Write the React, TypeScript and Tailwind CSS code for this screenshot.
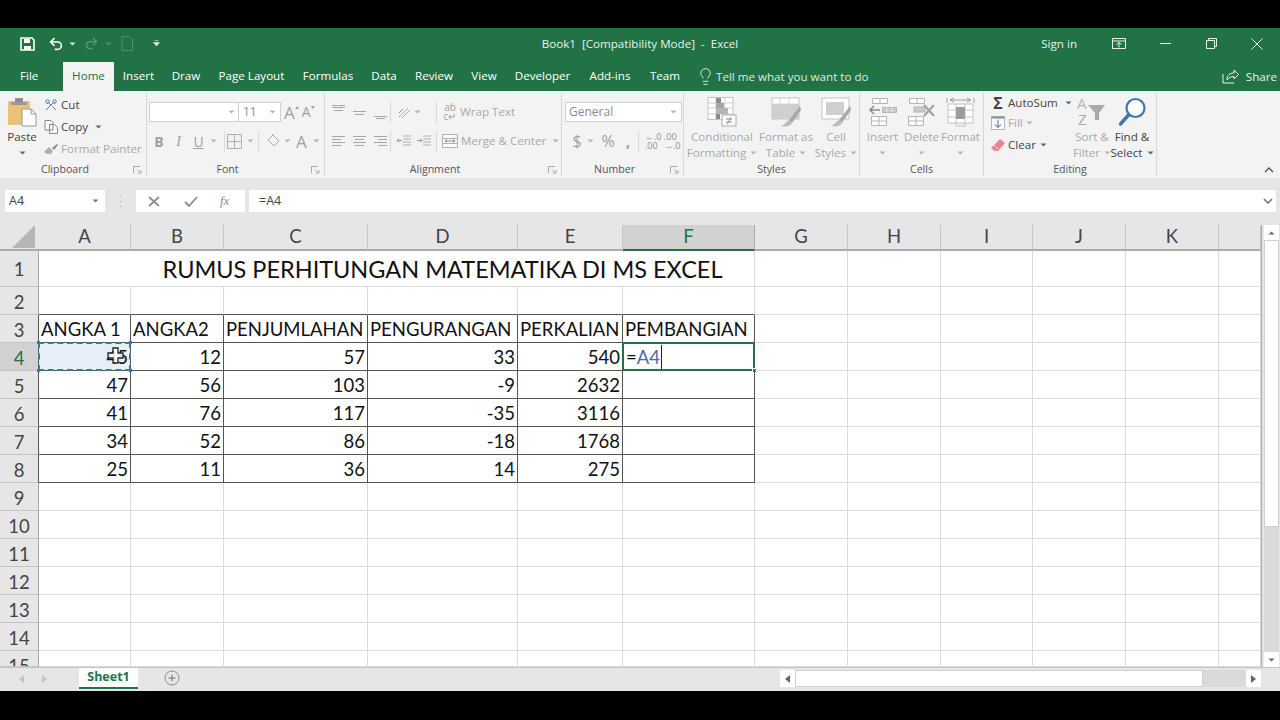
import type { ReactNode } from "react";
import { Lightbulb, Redo2, Scissors, Undo2 } from "lucide-react";

const COLS = ["A", "B", "C", "D", "E", "F", "G", "H", "I", "J", "K", ""];

const TABLE: Record<number, string[]> = {
  3: ["ANGKA 1", "ANGKA2", "PENJUMLAHAN", "PENGURANGAN", "PERKALIAN", "PEMBANGIAN"],
  4: ["45", "12", "57", "33", "540", ""],
  5: ["47", "56", "103", "-9", "2632", ""],
  6: ["41", "76", "117", "-35", "3116", ""],
  7: ["34", "52", "86", "-18", "1768", ""],
  8: ["25", "11", "36", "14", "275", ""],
};

const ROWS = [2, 3, 4, 5, 6, 7, 8, 9, 10, 11, 12, 13, 14, 15];

const TABS = [
  { name: "File", cls: "w-[63px] pl-5 text-left text-white" },
  { name: "Home", cls: "w-[51px] bg-[#f3f3f3] text-[#217346] text-center" },
  { name: "Insert", cls: "w-[49px] text-center text-white" },
  { name: "Draw", cls: "w-[46px] text-center text-white" },
  { name: "Page Layout", cls: "w-[85px] text-center text-white" },
  { name: "Formulas", cls: "w-[68px] text-center text-white" },
  { name: "Data", cls: "w-[44px] text-center text-white" },
  { name: "Review", cls: "w-[56px] text-center text-white" },
  { name: "View", cls: "w-[44px] text-center text-white" },
  { name: "Developer", cls: "w-[73px] text-center text-white" },
  { name: "Add-ins", cls: "w-[62px] text-center text-white" },
  { name: "Team", cls: "w-[48px] text-center text-white" },
];

function Caret({ className = "text-[#777]" }: { className?: string }) {
  return (
    <svg width="7" height="4" viewBox="0 0 7 4" className={`shrink-0 ${className}`}>
      <path d="M0.5 0.5h6L3.5 3.5z" fill="currentColor" />
    </svg>
  );
}

function Sep({ className }: { className: string }) {
  return <span className={`w-px h-[21px] bg-[#d9d9d9] shrink-0 ${className}`} />;
}

function Lines({ rows, stroke = "#a6a6a6" }: { rows: number[][]; stroke?: string }) {
  return (
    <svg width="15" height="15" viewBox="0 0 15 15" className="shrink-0">
      {rows.map(([x1, x2, y]) => (
        <path key={`${x1}-${y}`} d={`M${x1} ${y}.5H${x2}`} stroke={stroke} />
      ))}
    </svg>
  );
}

function Group({
  width,
  label,
  launcher,
  children,
}: {
  width: string;
  label: string;
  launcher?: boolean;
  children: ReactNode;
}) {
  return (
    <div className={`${width} h-[83px] mt-[2px] border-r border-[#d8d8d8] flex flex-col shrink-0`}>
      <div className="h-[70px] flex">{children}</div>
      <div className="h-[13px] mt-[2px] flex items-center text-[10.6px] text-[#555]">
        <div className="flex-1 text-center">{label}</div>
        {launcher && (
          <svg width="16" height="9" viewBox="0 0 16 9" className="shrink-0">
            <path d="M3.5 8V1.5H10M7 4.5L10 7.5M8 8H11V5" fill="none" stroke="#a6a6a6" />
          </svg>
        )}
      </div>
    </div>
  );
}

function BigButton({
  width,
  icon,
  lines,
  dim = true,
  caretOnly,
}: {
  width: string;
  icon: ReactNode;
  lines: [string, string];
  dim?: boolean;
  caretOnly?: boolean;
}) {
  const color = dim ? "text-[#a9a9a9]" : "text-[#444]";
  return (
    <div className={`${width} pt-[4px] flex flex-col items-center shrink-0 text-[11.6px] leading-[16px] ${color}`}>
      <div className="h-[30px] flex items-center justify-center">{icon}</div>
      <div className="mt-[2px] h-[16px] whitespace-nowrap">{lines[0]}</div>
      <div className="h-[16px] flex items-center gap-[4px] whitespace-nowrap">
        {lines[1]}
        {(lines[1] || caretOnly) && <Caret className={dim ? "text-[#b5b5b5]" : "text-[#666]"} />}
      </div>
    </div>
  );
}

function PasteIcon() {
  return (
    <svg width="30" height="30" viewBox="0 0 30 30">
      <rect x="1" y="4" width="22" height="24" fill="#e9c27a" />
      <rect x="8" y="1" width="8" height="6" fill="#8d8d8d" />
      <rect x="4" y="5" width="16" height="3" fill="#9a9a9a" />
      <path d="M15 12h9l5 5v12H15z" fill="#fff" stroke="#9a9a9a" />
      <path d="M24 12v5h5" fill="none" stroke="#9a9a9a" />
    </svg>
  );
}

function CondIcon() {
  return (
    <svg width="30" height="30" viewBox="0 0 30 30">
      <rect x="1" y="0.5" width="25" height="22" fill="#fff" stroke="#c4c4c4" />
      <path d="M1 6h25M1 11h25M1 17h25M9 1v21M18 1v21" stroke="#d0d0d0" />
      <rect x="9" y="1" width="5" height="5" fill="#8d8d8d" />
      <rect x="9" y="6" width="8" height="5" fill="#a6a6a6" />
      <rect x="9" y="11" width="12" height="6" fill="#b5b5b5" />
      <rect x="9" y="17" width="4" height="5" fill="#8d8d8d" />
      <rect x="15" y="18" width="14" height="11" fill="#fff" stroke="#a9a9a9" />
      <path d="M19 22h6M19 25h6M24 20.5l-4 7" stroke="#8d8d8d" fill="none" />
    </svg>
  );
}

function TableBrushIcon({ plain }: { plain?: boolean }) {
  return (
    <svg width="30" height="30" viewBox="0 0 30 30">
      <rect x="1" y="1" width="27" height="21" fill="#fff" stroke="#c4c4c4" />
      {!plain && <path d="M1 7h27M1 12h27M1 17h27M9 1v21M18 1v21" stroke="#d8d8d8" />}
      <rect x={plain ? 5 : 1} y={plain ? 5 : 7} width={plain ? 18 : 27} height={plain ? 13 : 15} fill="#cfcfcf" />
      <path d="M29 9L18 23l3 3L30 13z" fill="#a9a9a9" />
      <path d="M18 23c-3 1-3 4-8 6 5 1 10 0 11-3z" fill="#bdbdbd" />
    </svg>
  );
}

function InsertCellsIcon() {
  return (
    <svg width="30" height="30" viewBox="0 0 30 30">
      <path d="M4.5 1.5h15v5h-15zM12 1.5v5M3.5 19.5h15v9h-15zM11 19.5v9M3.5 24h15" fill="#fff" stroke="#b5b5b5" />
      <path d="M2 13h10M6 9l-4 4 4 4" fill="none" stroke="#8d8d8d" strokeWidth="1.6" />
      <path d="M14.5 10.5h14v5h-14z" fill="#c9c9c9" stroke="#b5b5b5" />
      <path d="M19 10.5v5M24 10.5v5" stroke="#eee" />
    </svg>
  );
}

function DeleteCellsIcon() {
  return (
    <svg width="30" height="30" viewBox="0 0 30 30">
      <path d="M2.5 1.5h15v5h-15zM10 1.5v5M1.5 19.5h15v9h-15zM9 19.5v9M1.5 24h15" fill="#fff" stroke="#b5b5b5" />
      <rect x="7" y="10" width="11" height="5" fill="#c9c9c9" stroke="#b5b5b5" />
      <path d="M17 8l10 11M27 8L17 19" stroke="#a0a0a0" strokeWidth="2" />
    </svg>
  );
}

function FormatCellsIcon() {
  return (
    <svg width="30" height="30" viewBox="0 0 30 30">
      <path d="M2 7h25v19H2zM2 13h25M2 20h25M10 7v19M19 7v19" fill="#fff" stroke="#c4c4c4" />
      <path d="M1 1v5M28 1v5M4 3h21M8 1L4 3l4 2M21 1l4 2-4 2" fill="none" stroke="#a0a0a0" />
      <rect x="10" y="10" width="9" height="12" fill="#9c9c9c" />
      <path d="M10 26v3h9v-3" fill="none" stroke="#c4c4c4" />
    </svg>
  );
}

function SortIcon() {
  return (
    <svg width="32" height="30" viewBox="0 0 32 30">
      <text x="1" y="12" fontSize="15" fill="#b5b5b5" fontFamily="'Open Sans', sans-serif">A</text>
      <text x="2" y="28" fontSize="15" fill="#a9a9a9" fontFamily="'Open Sans', sans-serif">Z</text>
      <path d="M12 8h17l-6 8v7h-4v-7z" fill="#a9a9a9" />
    </svg>
  );
}

function FindIcon() {
  return (
    <svg width="30" height="30" viewBox="0 0 30 30">
      <circle cx="18.5" cy="11" r="9" fill="#fff" stroke="#3f77ad" strokeWidth="2.2" />
      <path d="M11.5 18L3.5 27" stroke="#3f77ad" strokeWidth="3.4" strokeLinecap="round" />
    </svg>
  );
}

function RibbonTop() {
  return (
    <div className="h-[34px] pb-[3px] grid grid-cols-[1fr_auto_1fr] items-center text-[11.6px] text-white">
      <div className="flex items-center h-full">
        <svg width="15" height="14" viewBox="0 0 15 14" className="ml-[20px]">
          <path d="M1 1h11l2 2v10H1z" fill="none" stroke="#fff" strokeWidth="1.6" />
          <rect x="4" y="2" width="6" height="4" fill="#fff" />
          <rect x="4" y="9" width="7" height="4" fill="#fff" />
        </svg>
        <Undo2 size={16} strokeWidth={2.4} className="ml-[13px] text-white" />
        <Caret className="ml-[5px] text-[#dcebe2]" />
        <Redo2 size={15} strokeWidth={2} className="ml-[8px] text-[#5c9a7b]" />
        <Caret className="ml-[6px] text-[#4f8f6f]" />
        <svg width="12" height="15" viewBox="0 0 12 15" className="ml-[9px]">
          <path d="M1 .5h7l3.5 3.500v10.500H1z" fill="none" stroke="#4f8f6f" />
        </svg>
        <svg width="7" height="7" viewBox="0 0 7 7" className="ml-[20px]">
          <path d="M1.500 .5h4M.5 2.500h6L3.500 6z" stroke="#dcebe2" fill="#dcebe2" strokeWidth=".6" />
        </svg>
      </div>
      <div className="whitespace-pre text-[#e8f1ec]">Book1  [Compatibility Mode]  -  Excel</div>
      <div className="flex items-center justify-end h-full">
        <span className="mr-[19px] text-[#e8f1ec]">Sign in</span>
        <div className="w-[46px] flex justify-center">
          <svg width="14" height="12" viewBox="0 0 14 12">
            <path d="M.5 .5h13v10H.5zM.5 3h13M7 9.500V4.500M4.500 6.500L7 4.500l2.500 2" fill="none" stroke="#e8f1ec" />
          </svg>
        </div>
        <div className="w-[46px] flex justify-center">
          <svg width="11" height="1" viewBox="0 0 11 1"><path d="M0 .5h11" stroke="#e8f1ec" /></svg>
        </div>
        <div className="w-[46px] flex justify-center">
          <svg width="11" height="11" viewBox="0 0 11 11">
            <path d="M.5 2.500h8v8h-8zM2.500 2.500v-2h8v8h-2" fill="none" stroke="#e8f1ec" />
          </svg>
        </div>
        <div className="w-[46px] flex justify-center">
          <svg width="12" height="12" viewBox="0 0 12 12"><path d="M.5 .5l11 11M11.500 .5l-11 11" stroke="#e8f1ec" /></svg>
        </div>
      </div>
    </div>
  );
}

function TabRow() {
  return (
    <div className="h-[29px] flex items-stretch text-[11.6px]">
      {TABS.map((t) => (
        <div key={t.name} className={`${t.cls} leading-[28px] shrink-0`}>{t.name}</div>
      ))}
      <div className="ml-[7px] flex items-center text-[#dfeae4]">
        <Lightbulb size={19} strokeWidth={1.2} className="-mt-[1px]" />
        <span className="ml-[1px] mt-[1px]">Tell me what you want to do</span>
      </div>
      <div className="ml-auto mr-[3px] flex items-center text-[#e8f1ec]">
        <svg width="17" height="15" viewBox="0 0 17 15" className="mr-[7px]">
          <path d="M1 5v9h11M5 11c0-5 3-7 7-7V1l4.500 4.500L12 10V7.500c-3 0-5 1-7 3.500z" fill="none" stroke="#e8f1ec" />
        </svg>
        Share
      </div>
    </div>
  );
}

function Ribbon() {
  return (
    <div className="h-[87px] bg-[#f3f3f3] flex items-start whitespace-nowrap">
      <Group width="w-[147px]" label="Clipboard" launcher>
        <BigButton
          width="w-[44px]"
          dim={false}
          icon={<PasteIcon />}
          lines={["Paste", ""]}
          caretOnly
        />
        <div className="pt-[1px] text-[11.6px] text-[#444]">
          <div className="h-[22px] flex items-center">
            <Scissors size={14} strokeWidth={1.5} className="text-[#4a6a90] -scale-y-100 rotate-90" />
            <span className="ml-[3px]">Cut</span>
          </div>
          <div className="h-[22px] flex items-center">
            <svg width="14" height="14" viewBox="0 0 14 14">
              <path d="M1 .5h6l2 2V10H1zM5.500 4.500h5l3 3v6h-8z" fill="#f8f8f8" stroke="#8a8a8a" />
            </svg>
            <span className="ml-[3px]">Copy</span>
            <Caret className="ml-[7px] text-[#666]" />
          </div>
          <div className="h-[22px] flex items-center text-[#a9a9a9]">
            <svg width="15" height="12" viewBox="0 0 15 12">
              <path d="M0 9l5-5 4 4-2 3H3z" fill="#b0b0b0" />
              <path d="M8 5l5-4 1 1-4 5z" fill="#8d8d8d" />
            </svg>
            <span className="ml-[2px]">Format Painter</span>
          </div>
        </div>
      </Group>

      <Group width="w-[178px]" label="Font" launcher>
        <div className="flex flex-col pl-[2px] pt-[9px]">
          <div className="h-[20px] flex items-center">
            <div className="w-[90px] h-[20px] bg-white border border-[#d0d0d0] flex items-center justify-end pr-[3px]">
              <Caret className="text-[#b5b5b5]" />
            </div>
            <div className="w-[43px] h-[20px] -ml-px bg-white border border-[#d0d0d0] flex items-center justify-between px-[4px] text-[12px] text-[#8c8c8c]">
              11
              <Caret className="text-[#b5b5b5]" />
            </div>
            <span className="ml-[3px] text-[17px] leading-none text-[#a0a0a0]">A</span>
            <svg width="4" height="3" viewBox="0 0 4 3" className="mb-[10px]"><path d="M0 3l2-3 2 3z" fill="#a0a0a0" /></svg>
            <span className="ml-[3px] text-[14px] leading-none text-[#a0a0a0]">A</span>
            <svg width="4" height="3" viewBox="0 0 4 3" className="mb-[10px]"><path d="M0 0l2 3 2-3z" fill="#a0a0a0" /></svg>
          </div>
          <div className="mt-[7px] h-[24px] flex items-center text-[#a0a0a0] text-[14px]">
            <span className="w-[20px] text-center font-bold">B</span>
            <span className="w-[19px] text-center italic font-['Liberation_Serif',serif]">I</span>
            <span className="w-[21px] text-center underline">U</span>
            <Caret className="ml-[1px] text-[#b5b5b5]" />
            <Sep className="ml-[7px]" />
            <svg width="15" height="15" viewBox="0 0 15 15" className="ml-[2px]">
              <path d="M.5 .5h14v14H.5zM7.500 .5v14M.5 7.500h14" fill="none" stroke="#b0b0b0" />
            </svg>
            <Caret className="ml-[5px] text-[#b5b5b5]" />
            <Sep className="ml-[4px]" />
            <svg width="14" height="14" viewBox="0 0 14 14" className="ml-[7px]">
              <path d="M7 1l6 6-5 5-6-6zM7 1V0" fill="none" stroke="#a9a9a9" />
            </svg>
            <Caret className="ml-[4px] text-[#b5b5b5]" />
            <span className="ml-[5px] text-[17px] leading-none">A</span>
            <Caret className="ml-[6px] text-[#b5b5b5]" />
          </div>
        </div>
      </Group>

      <Group width="w-[237px]" label="Alignment" launcher>
        <div className="flex flex-col pl-[6px] pt-[8px]">
          <div className="h-[22px] flex items-center">
            <Lines rows={[[1, 14, 2], [3, 12, 5], [1, 14, 0]]} />
            <span className="w-[6px]" />
            <Lines rows={[[1, 14, 6], [3, 12, 9]]} />
            <span className="w-[6px]" />
            <Lines rows={[[1, 14, 11], [3, 12, 13]]} />
            <Sep className="ml-[2px]" />
            <svg width="15" height="15" viewBox="0 0 15 15" className="ml-[6px]">
              <path d="M2 12L11 3M5 13l8-8" stroke="#b0b0b0" />
              <path d="M2 8l4-4" stroke="#8d8d8d" />
            </svg>
            <Caret className="ml-[2px] text-[#b5b5b5]" />
            <Sep className="ml-[15px]" />
            <span className="ml-[6px] w-[14px] text-[10px] leading-[9px] text-[#a0a0a0] text-center">ab<br />c↵</span>
            <span className="ml-[3px] text-[11.6px] text-[#a9a9a9]">Wrap Text</span>
          </div>
          <div className="mt-[7px] h-[22px] flex items-center">
            <Lines rows={[[1, 14, 2], [1, 10, 5], [1, 14, 8], [1, 10, 11]]} />
            <span className="w-[6px]" />
            <Lines rows={[[1, 14, 2], [3, 12, 5], [1, 14, 8], [3, 12, 11]]} />
            <span className="w-[6px]" />
            <Lines rows={[[1, 14, 2], [5, 14, 5], [1, 14, 8], [5, 14, 11]]} />
            <Sep className="ml-[2px]" />
            <svg width="15" height="13" viewBox="0 0 15 13" className="ml-[5px]">
              <path d="M7 1h8M7 4h8M7 7h8M7 10h8" stroke="#b0b0b0" />
              <path d="M6 5.500H1M3 3.500L1 5.500l2 2" fill="none" stroke="#8a9ab0" />
            </svg>
            <svg width="15" height="13" viewBox="0 0 15 13" className="ml-[5px]">
              <path d="M7 1h8M7 4h8M7 7h8M7 10h8" stroke="#b0b0b0" />
              <path d="M1 5.500h5M4 3.500l2 2-2 2" fill="none" stroke="#8a9ab0" />
            </svg>
            <Sep className="ml-[5px]" />
            <svg width="16" height="14" viewBox="0 0 16 14" className="ml-[5px]">
              <path d="M.5 .5h15v13H.5zM.5 4.500h15M.5 9.500h15" fill="#fafafa" stroke="#b0b0b0" />
              <path d="M3 7h10M5 5.500L3 7l2 1.500M11 5.500L13 7l-2 1.500" fill="none" stroke="#909090" />
            </svg>
            <span className="ml-[3px] text-[11.6px] text-[#a9a9a9]">Merge &amp; Center</span>
            <Caret className="ml-[6px] text-[#b5b5b5]" />
          </div>
        </div>
      </Group>

      <Group width="w-[122px]" label="Number" launcher>
        <div className="flex flex-col pl-[3px] pt-[9px]">
          <div className="w-[117px] h-[20px] bg-white border border-[#d0d0d0] flex items-center justify-between pl-[3px] pr-[4px] text-[12px] text-[#8c8c8c]">
            General
            <Caret className="text-[#b5b5b5]" />
          </div>
          <div className="mt-[7px] h-[24px] flex items-center text-[#a0a0a0]">
            <span className="ml-[6px] w-[12px] text-center text-[16px]">$</span>
            <Caret className="ml-[4px] text-[#b5b5b5]" />
            <span className="ml-[5px] w-[18px] text-center text-[16px]">%</span>
            <span className="ml-[7px] w-[8px] text-center text-[16px] font-bold leading-none">,</span>
            <Sep className="ml-[6px]" />
            <span className="ml-[6px] w-[17px] text-[9px] leading-[9px] whitespace-pre text-[#8f8f8f]">{"←.0\n.00"}</span>
            <span className="ml-[2px] w-[17px] text-[9px] leading-[9px] whitespace-pre text-[#8f8f8f]">{".00\n→.0"}</span>
          </div>
        </div>
      </Group>

      <Group width="w-[176px]" label="Styles">
        <BigButton width="w-[76px]" icon={<CondIcon />} lines={["Conditional", "Formatting"]} />
        <BigButton width="w-[52px]" icon={<TableBrushIcon />} lines={["Format as", "Table"]} />
        <BigButton width="w-[48px]" icon={<TableBrushIcon plain />} lines={["Cell", "Styles"]} />
      </Group>

      <Group width="w-[124px]" label="Cells">
        <span className="w-[3px]" />
        <BigButton width="w-[39px]" icon={<InsertCellsIcon />} lines={["Insert", ""]} caretOnly />
        <BigButton width="w-[39px]" icon={<DeleteCellsIcon />} lines={["Delete", ""]} caretOnly />
        <BigButton width="w-[39px]" icon={<FormatCellsIcon />} lines={["Format", ""]} caretOnly />
      </Group>

      <Group width="w-[173px]" label="Editing">
        <div className="w-[88px] pl-[7px] text-[11.6px] text-[#444] shrink-0">
          <div className="h-[20px] flex items-center">
            <span className="w-[14px] shrink-0 text-[16px] font-bold leading-none text-[#444] text-center">Σ</span>
            <span className="ml-[3px]">AutoSum</span>
            <Caret className="ml-[7px] text-[#666]" />
          </div>
          <div className="h-[20px] flex items-center text-[#a9a9a9]">
            <svg width="14" height="14" viewBox="0 0 14 14">
              <path d="M.5 .5h13v13H.5z" fill="#fafafa" stroke="#b5b5b5" />
              <path d="M.5 1.500h13" stroke="#8d8d8d" strokeWidth="2" />
              <path d="M7 3.500v8M4 8.500l3 3 3-3" fill="none" stroke="#7f9bbd" strokeWidth="1.400" />
            </svg>
            <span className="ml-[3px]">Fill</span>
            <Caret className="ml-[3px] text-[#b5b5b5]" />
          </div>
          <div className="h-[24px] flex items-center">
            <svg width="14" height="13" viewBox="0 0 14 13">
              <path d="M9 0l5 4-7 8H4L0 9z" fill="#e8838f" />
              <path d="M3 6l4 4" stroke="#fff" />
            </svg>
            <span className="ml-[3px]">Clear</span>
            <Caret className="ml-[4px] text-[#666]" />
          </div>
        </div>
        <BigButton width="w-[40px]" icon={<SortIcon />} lines={["Sort &", "Filter"]} />
        <BigButton width="w-[40px]" dim={false} icon={<FindIcon />} lines={["Find &", "Select"]} />
      </Group>

      <svg width="10" height="6" viewBox="0 0 10 6" className="ml-auto mr-[6px] mt-[76px]">
        <path d="M1 5l4-4 4 4" fill="none" stroke="#555" strokeWidth="1.400" />
      </svg>
    </div>
  );
}

function FormulaBar() {
  return (
    <div className="h-[47px] bg-[#e6e6e6] pt-[12px] pl-[5px] pr-[4px] flex items-start text-[12.5px] text-[#444]">
      <div className="w-[100px] h-[22px] bg-white flex items-center justify-between pl-[4px] pr-[6px]">
        A4
        <Caret className="text-[#777]" />
      </div>
      <div className="w-[31px] h-[22px] flex items-center justify-center text-[#b0b0b0]">
        <svg width="3" height="11" viewBox="0 0 3 11">
          <path d="M1 0h1v1H1zM1 5h1v1H1zM1 10h1v1H1z" fill="currentColor" />
        </svg>
      </div>
      <div className="w-[109px] h-[22px] bg-white flex items-center text-[#8c8c8c]">
        <svg width="12" height="11" viewBox="0 0 12 11" className="ml-[12px]">
          <path d="M1 1l10 9M11 1L1 10" stroke="currentColor" strokeWidth="1.700" />
        </svg>
        <svg width="14" height="11" viewBox="0 0 14 11" className="ml-[24px]">
          <path d="M1 6l4 4 8-9" fill="none" stroke="currentColor" strokeWidth="1.800" />
        </svg>
        <span className="ml-[22px] italic text-[13px] font-['Liberation_Serif',serif]">fx</span>
      </div>
      <div className="ml-[4px] flex-1 h-[22px] bg-white flex items-center justify-between pl-[10px] pr-[3px]">
        =A4
        <svg width="10" height="6" viewBox="0 0 10 6">
          <path d="M1 1l4 4 4-4" fill="none" stroke="#777" strokeWidth="1.600" />
        </svg>
      </div>
    </div>
  );
}

function DataCell({ row, col }: { row: number; col: number }) {
  const inTable = col < 6;
  const darkBottom = inTable && row >= 2 && row <= 8;
  const darkRight = inTable && row >= 3 && row <= 8;
  const text = TABLE[row]?.[col] ?? "";
  const isHeader = row === 3;
  const isMarked = row === 4 && col === 0;
  const isEditing = row === 4 && col === 5;

  return (
    <div
      className={`relative overflow-visible border-r border-b flex items-center pt-[3px] ${
        darkBottom ? "border-b-[#555]" : "border-b-[#dcdcdc]"
      } ${darkRight ? "border-r-[#555]" : "border-r-[#dcdcdc]"} ${
        isHeader ? "justify-start pl-[2px]" : "justify-end pr-[2px]"
      } ${isMarked ? "bg-[#e6eef8]" : ""}`}
    >
      {text && <span className="whitespace-nowrap">{text}</span>}
      {isMarked && (
        <>
          <div className="absolute -left-px -top-px -right-px -bottom-px border-2 border-dashed border-[#3f7d80]" />
          <div className="absolute -left-[2px] -top-[2px] w-[3px] h-[3px] bg-[#4a6db0]" />
          <div className="absolute -right-[2px] -top-[2px] w-[3px] h-[3px] bg-[#4a6db0]" />
          <div className="absolute -left-[2px] -bottom-[2px] w-[3px] h-[3px] bg-[#4a6db0]" />
          <div className="absolute -right-[2px] -bottom-[2px] w-[3px] h-[3px] bg-[#4a6db0]" />
          <svg width="18" height="18" viewBox="0 0 18 18" className="absolute left-[68px] top-[4px]">
            <path
              d="M6 1h5v5h5v5h-5v5H6v-5H1V6h5z"
              fill="#fff"
              fillOpacity="0.85"
              stroke="#222"
              strokeWidth="1.300"
            />
          </svg>
        </>
      )}
      {isEditing && (
        <>
          <div className="absolute -left-px -top-px -right-px -bottom-px border-2 border-[#217346]" />
          <div className="absolute left-[3px] top-0 bottom-0 flex items-center">
            <span className="pt-[3px]">=</span>
            <span className="pt-[3px] text-[#4a6db0]">A4</span>
            <span className="ml-[1px] w-px h-[24px] bg-[#222]" />
          </div>
          <div className="absolute -right-[3px] -bottom-[3px] w-[5px] h-[5px] bg-[#217346] border border-white" />
        </>
      )}
    </div>
  );
}

function Sheet() {
  return (
    <div className="h-[442px] flex bg-white">
      <div className="w-[1261px] overflow-hidden grid grid-cols-[39px_92px_93px_144px_150px_105px_132px_93px_93px_92px_93px_93px_42px] grid-rows-[26px_36px_repeat(13,28px)_16px] font-['Lato','Liberation_Sans',sans-serif] text-[18.5px] text-[#111]">
        <div className="bg-[#e6e6e6] border-b-2 border-[#ababab] relative">
          <svg width="24" height="24" viewBox="0 0 24 24" className="ml-[12px]">
            <path d="M23 0v23H0z" fill="#b5b5b5" />
          </svg>
        </div>
        {COLS.map((c) => (
          <div
            key={c}
            className={`flex items-center justify-center border-r text-[#444] ${
              c === "F"
                ? "bg-[#d2d2d2] border-b-2 border-b-[#217346] border-r-[#ababab] text-[#217346]"
                : "bg-[#e6e6e6] border-b-2 border-b-[#ababab] border-r-[#c4c4c4]"
            }`}
          >
            {c}
          </div>
        ))}

        <div className="bg-[#e6e6e6] border-r border-b border-r-[#ababab] border-b-[#c4c4c4] flex items-center justify-center pt-[3px] text-[#444]">1</div>
        <div className="col-span-6 border-r border-b border-[#dcdcdc] flex items-center justify-center pl-[92px] pt-[3px] text-[23.500px]">
          RUMUS PERHITUNGAN MATEMATIKA DI MS EXCEL
        </div>
        {COLS.slice(6).map((c) => (
          <div key={`r1${c}`} className="border-r border-b border-[#dcdcdc]" />
        ))}

        {ROWS.map((row) => (
          <RowCells key={row} row={row} />
        ))}
      </div>
      <div className="w-[19px] bg-[#e6e6e6] border-l border-[#ababab] flex flex-col items-center">
        <div className="w-[15px] h-[15px] bg-white flex items-center justify-center">
          <Caret className="rotate-180 text-[#666]" />
        </div>
        <div className="w-[15px] h-[287px] bg-white border border-[#d0d0d0]" />
        <div className="w-[15px] flex-1 bg-[#dadada]" />
        <div className="w-[15px] h-[15px] bg-white flex items-center justify-center">
          <Caret className="text-[#666]" />
        </div>
      </div>
    </div>
  );
}

function RowCells({ row }: { row: number }) {
  const selected = row === 4;
  const dark = row >= 3 && row <= 8;
  return (
    <>
      <div
        className={`overflow-hidden border-r border-b ${
          selected ? "bg-[#d2d2d2] text-[#217346]" : "bg-[#e6e6e6] text-[#444]"
        } ${dark ? "border-r-[#555]" : "border-r-[#ababab]"} border-b-[#c4c4c4]`}
      >
        <div className="h-[28px] pt-[3px] flex items-center justify-center">{row}</div>
      </div>
      {COLS.map((_, col) => (
        <DataCell key={col} row={row} col={col} />
      ))}
    </>
  );
}

function SheetTabs() {
  return (
    <div className="h-[24px] bg-[#e6e6e6] border-t border-[#c4c4c4] flex items-start">
      <svg width="5" height="8" viewBox="0 0 5 8" className="ml-[19px] mt-[7px]">
        <path d="M5 0v8L0 4z" fill="#c4c4c4" />
      </svg>
      <svg width="5" height="8" viewBox="0 0 5 8" className="ml-[18px] mt-[7px]">
        <path d="M0 0v8l5-4z" fill="#c4c4c4" />
      </svg>
      <div className="ml-[32px] w-[59px] h-[21px] bg-white border-b-2 border-[#217346] flex items-center justify-center text-[12.5px] font-bold text-[#217346]">
        Sheet1
      </div>
      <svg width="16" height="16" viewBox="0 0 16 16" className="ml-[26px] mt-[2px]">
        <circle cx="8" cy="8" r="7" fill="none" stroke="#8c8c8c" />
        <path d="M8 4.500v7M4.500 8h7" stroke="#707070" />
      </svg>
      <div className="ml-[600px] mt-[2px] w-[481px] h-[17px] flex items-stretch">
        <div className="w-[15px] bg-white flex items-center justify-center">
          <svg width="5" height="8" viewBox="0 0 5 8"><path d="M5 0v8L0 4z" fill="#666" /></svg>
        </div>
        <div className="w-[408px] bg-white border border-[#d0d0d0]" />
        <div className="flex-1 bg-[#dadada]" />
        <div className="w-[15px] bg-white flex items-center justify-center">
          <svg width="5" height="8" viewBox="0 0 5 8"><path d="M0 0v8l5-4z" fill="#666" /></svg>
        </div>
      </div>
    </div>
  );
}

export default function App() {
  return (
    <div className="w-[1280px] h-[720px] bg-black overflow-hidden pt-[28px] font-['Open_Sans','Liberation_Sans',sans-serif]">
      <div className="bg-[#217346]">
        <RibbonTop />
        <TabRow />
      </div>
      <Ribbon />
      <FormulaBar />
      <Sheet />
      <SheetTabs />
    </div>
  );
}
